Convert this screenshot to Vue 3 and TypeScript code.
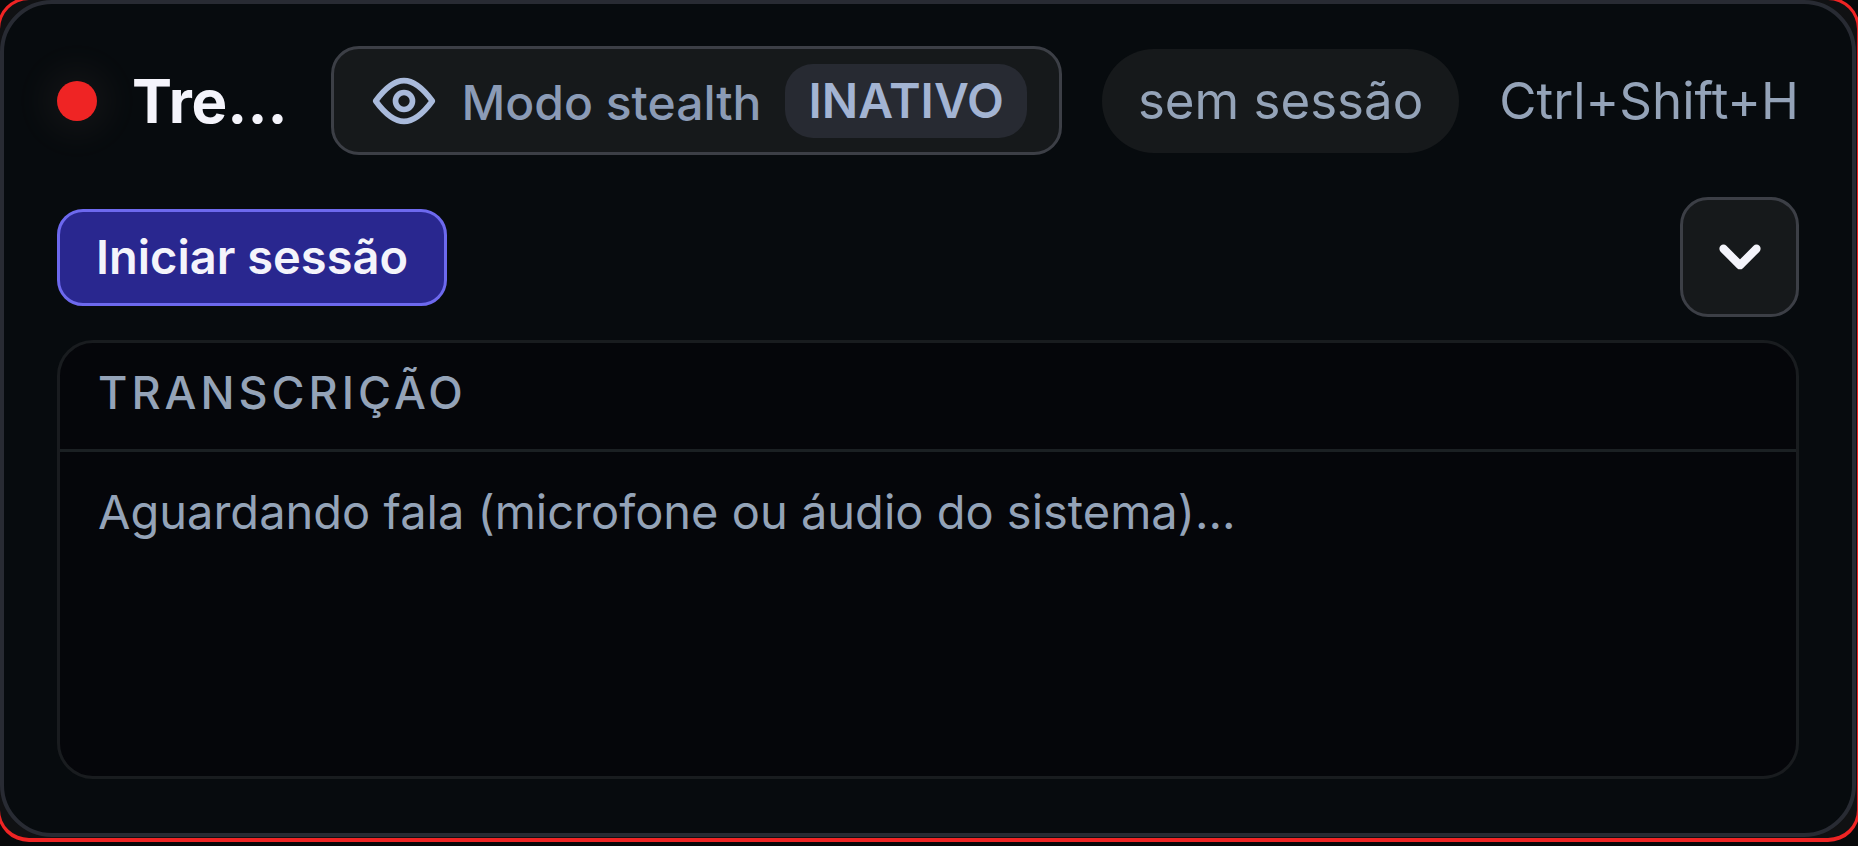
<script setup lang="ts">
import { ref } from 'vue'

const title = ref('Tre...')
const stealthActive = ref(false)
const expanded = ref(true)
const sessionLabel = ref('sem sessão')
const shortcut = 'Ctrl+Shift+H'
</script>

<template>
  <div class="viewport">
    <div class="frame">
      <main class="card">
        <header class="topbar">
          <span class="dot" aria-hidden="true"></span>
          <h1 class="title">{{ title }}</h1>
          <button
            class="stealth"
            type="button"
            :aria-pressed="stealthActive"
            @click="stealthActive = !stealthActive"
          >
            <svg class="eye" viewBox="0 0 24 24" aria-hidden="true">
              <path d="M2 12C4.2 9 7.6 4.8 12 4.8S19.8 9 22 12C19.8 15 16.4 19.2 12 19.2S4.2 15 2 12Z" />
              <circle cx="12" cy="12" r="3" />
            </svg>
            <span class="stealth-label">Modo stealth</span>
            <span class="badge">{{ stealthActive ? 'ATIVO' : 'INATIVO' }}</span>
          </button>
          <span class="session">{{ sessionLabel }}</span>
          <span class="shortcut">{{ shortcut }}</span>
        </header>

        <div class="actions">
          <button class="start" type="button">Iniciar sessão</button>
          <button
            class="toggle"
            type="button"
            aria-label="Alternar transcrição"
            :aria-expanded="expanded"
            @click="expanded = !expanded"
          >
            <svg class="chevron" viewBox="0 0 24 24" aria-hidden="true">
              <path d="m6 9 6 6 6-6" />
            </svg>
          </button>
        </div>

        <section v-if="expanded" class="panel" aria-labelledby="transcript-title">
          <h2 id="transcript-title" class="panel-title">TRANSCRIÇÃO</h2>
          <p class="panel-text">Aguardando fala (microfone ou áudio do sistema)...</p>
        </section>
      </main>
    </div>
  </div>
</template>

<style>
body {
  margin: 0;
  background: #08090b;
}
</style>

<style scoped>
.viewport {
  box-sizing: border-box;
  display: flex;
  min-height: 100vh;
  padding-bottom: 4px;
  overflow: hidden;
  background: #08090b;
  font-family: Inter, "Liberation Sans", sans-serif;
  color: #94a3b8;
}

.frame {
  box-sizing: border-box;
  display: flex;
  flex: 1;
  min-width: 0;
  margin: -3px -2px 0 -3px;
  border: 3px solid #ef2424;
  border-bottom-width: 4px;
  border-radius: 32px;
  background: #101113;
}

.card {
  box-sizing: border-box;
  display: flex;
  flex: 1;
  flex-direction: column;
  min-width: 0;
  margin: 0 1px 1px 0;
  padding: 42px 53px 54px;
  border: 4px solid #282b33;
  border-radius: 52px;
  background: #070b0e;
}

.topbar {
  display: flex;
  align-items: center;
  gap: 40px;
}

.dot {
  flex: none;
  width: 40px;
  height: 40px;
  margin-right: -5px;
  border-radius: 50%;
  background: #ef2424;
  box-shadow: 0 0 36px 14px rgba(255, 190, 180, 0.05);
}

.title {
  flex: 1;
  min-width: 0;
  margin: 0;
  overflow: hidden;
  font-size: 60px;
  font-weight: 700;
  line-height: 72px;
  white-space: nowrap;
  color: #f4f4fb;
}

button {
  margin: 0;
  font-family: inherit;
  cursor: pointer;
}

.stealth {
  box-sizing: border-box;
  display: flex;
  flex: none;
  align-items: center;
  height: 109px;
  padding: 0 32px 0 36px;
  border: 3px solid #3c3f46;
  border-radius: 28px;
  background: #16191b;
  color: #9eafcc;
}

.eye {
  width: 68px;
  height: 68px;
  margin-right: 24px;
  fill: none;
  stroke: #a9badb;
  stroke-width: 2;
  stroke-linecap: round;
  stroke-linejoin: round;
}

.stealth-label {
  padding-top: 4px;
  font-size: 48px;
  font-weight: 500;
  line-height: 60px;
  color: #8b9bb6;
}

.badge {
  margin-left: 24px;
  padding: 7px 23px;
  border-radius: 28px;
  background: #272a32;
  font-size: 48px;
  font-weight: 600;
  line-height: 60px;
  color: #a3b4d3;
}

.session {
  flex: none;
  padding: 22px 36px;
  border-radius: 52px;
  background: #16191b;
  font-size: 51px;
  line-height: 60px;
}

.shortcut {
  flex: none;
  font-size: 51px;
  line-height: 60px;
}

.actions {
  display: flex;
  align-items: center;
  justify-content: space-between;
  margin-top: 42px;
}

.start {
  box-sizing: border-box;
  height: 97px;
  padding: 0 36px;
  border: 3px solid #6d69ee;
  border-radius: 26px;
  background: #29278f;
  font-size: 47px;
  font-weight: 600;
  line-height: 60px;
  color: #f4f4fb;
}

.toggle {
  box-sizing: border-box;
  display: flex;
  align-items: center;
  justify-content: center;
  width: 119px;
  height: 120px;
  padding: 0;
  border: 3px solid #3c3f46;
  border-radius: 28px;
  background: #16191b;
}

.chevron {
  width: 66px;
  height: 66px;
  fill: none;
  stroke: #f4f4fb;
  stroke-width: 3;
  stroke-linecap: round;
  stroke-linejoin: round;
}

.panel {
  box-sizing: border-box;
  flex: 1;
  margin-top: 23px;
  border: 3px solid #191c1f;
  border-radius: 36px;
  background: #05060a;
}

.panel-title {
  margin: 0;
  padding: 20px 38px 26px;
  border-bottom: 3px solid #1b2023;
  font-size: 45px;
  font-weight: 500;
  line-height: 60px;
  letter-spacing: 4px;
}

.panel-text {
  margin: 0;
  padding: 30px 38px;
  font-size: 47px;
  line-height: 60px;
}
</style>
